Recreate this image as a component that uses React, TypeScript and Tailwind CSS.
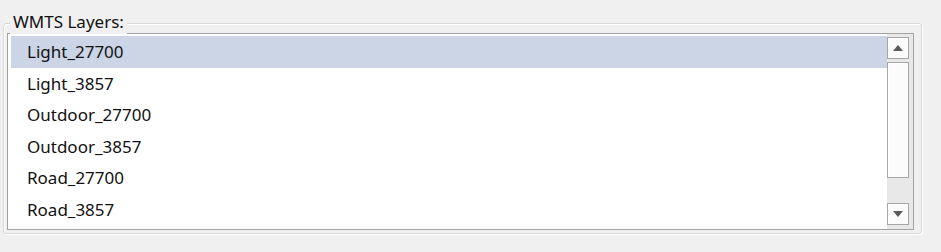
import React from "react";

const layers = ["Light_27700", "Light_3857", "Outdoor_27700", "Outdoor_3857", "Road_27700", "Road_3857"];

const Arrow = ({ down }: { down?: boolean }) => (
    <svg width="10" height="6" viewBox="0 0 10 6">
        <path d={down ? "M0 0H10L5 6Z" : "M0 6H10L5 0Z"} fill="#5a5a5a" />
    </svg>
);

const ScrollButton = ({ down }: { down?: boolean }) => (
    <div className="w-[22px] h-[22px] border border-[#a6a6a6] bg-[#fbfbfb] shadow-[inset_1px_1px_0_#fff] flex items-center justify-center">
        <Arrow down={down} />
    </div>
);

export default function App() {
    return (
        <div className="w-[941px] h-[252px] bg-[#f0f0f0] pt-[23px] pl-[3px] text-[#111]"
            style={{ fontFamily: '"Noto Sans", "Segoe UI", sans-serif' }}>
            <div className="relative w-[919px] h-[211px] border border-[#d9d9d9] rounded-[3px] shadow-[inset_1px_1px_0_#fff,1px_1px_0_#fff] pt-[9px] pl-[3px]">
                <span className="absolute left-[6px] -top-[14px] px-[3px] bg-[#f0f0f0] text-[17px] leading-[24px]">
                    WMTS Layers:
                </span>

                <div className="w-[907px] h-[197px] border border-[#a3a3a3] bg-white flex">
                    <div className="flex-1 pt-[2px] pl-[3px]">
                        {layers.map((name, i) => (
                            <div key={name}
                                className={`h-[31.6px] pl-[16px] flex items-center text-[17px] ${i === 0 ? "bg-[#cbd5e6]" : ""}`}>
                                {name}
                            </div>
                        ))}
                    </div>

                    <div className="w-[26px] bg-[#e8e8e8] pt-[3px] pb-[4px] pr-[3px] flex flex-col">
                        <ScrollButton />
                        <div className="mt-[3px] h-[116px] w-[22px] border border-[#a6a6a6] bg-[#fbfbfb] shadow-[inset_1px_1px_0_#fff]" />
                        <div className="flex-1" />
                        <ScrollButton down />
                    </div>
                </div>
            </div>
        </div>
    );
}
